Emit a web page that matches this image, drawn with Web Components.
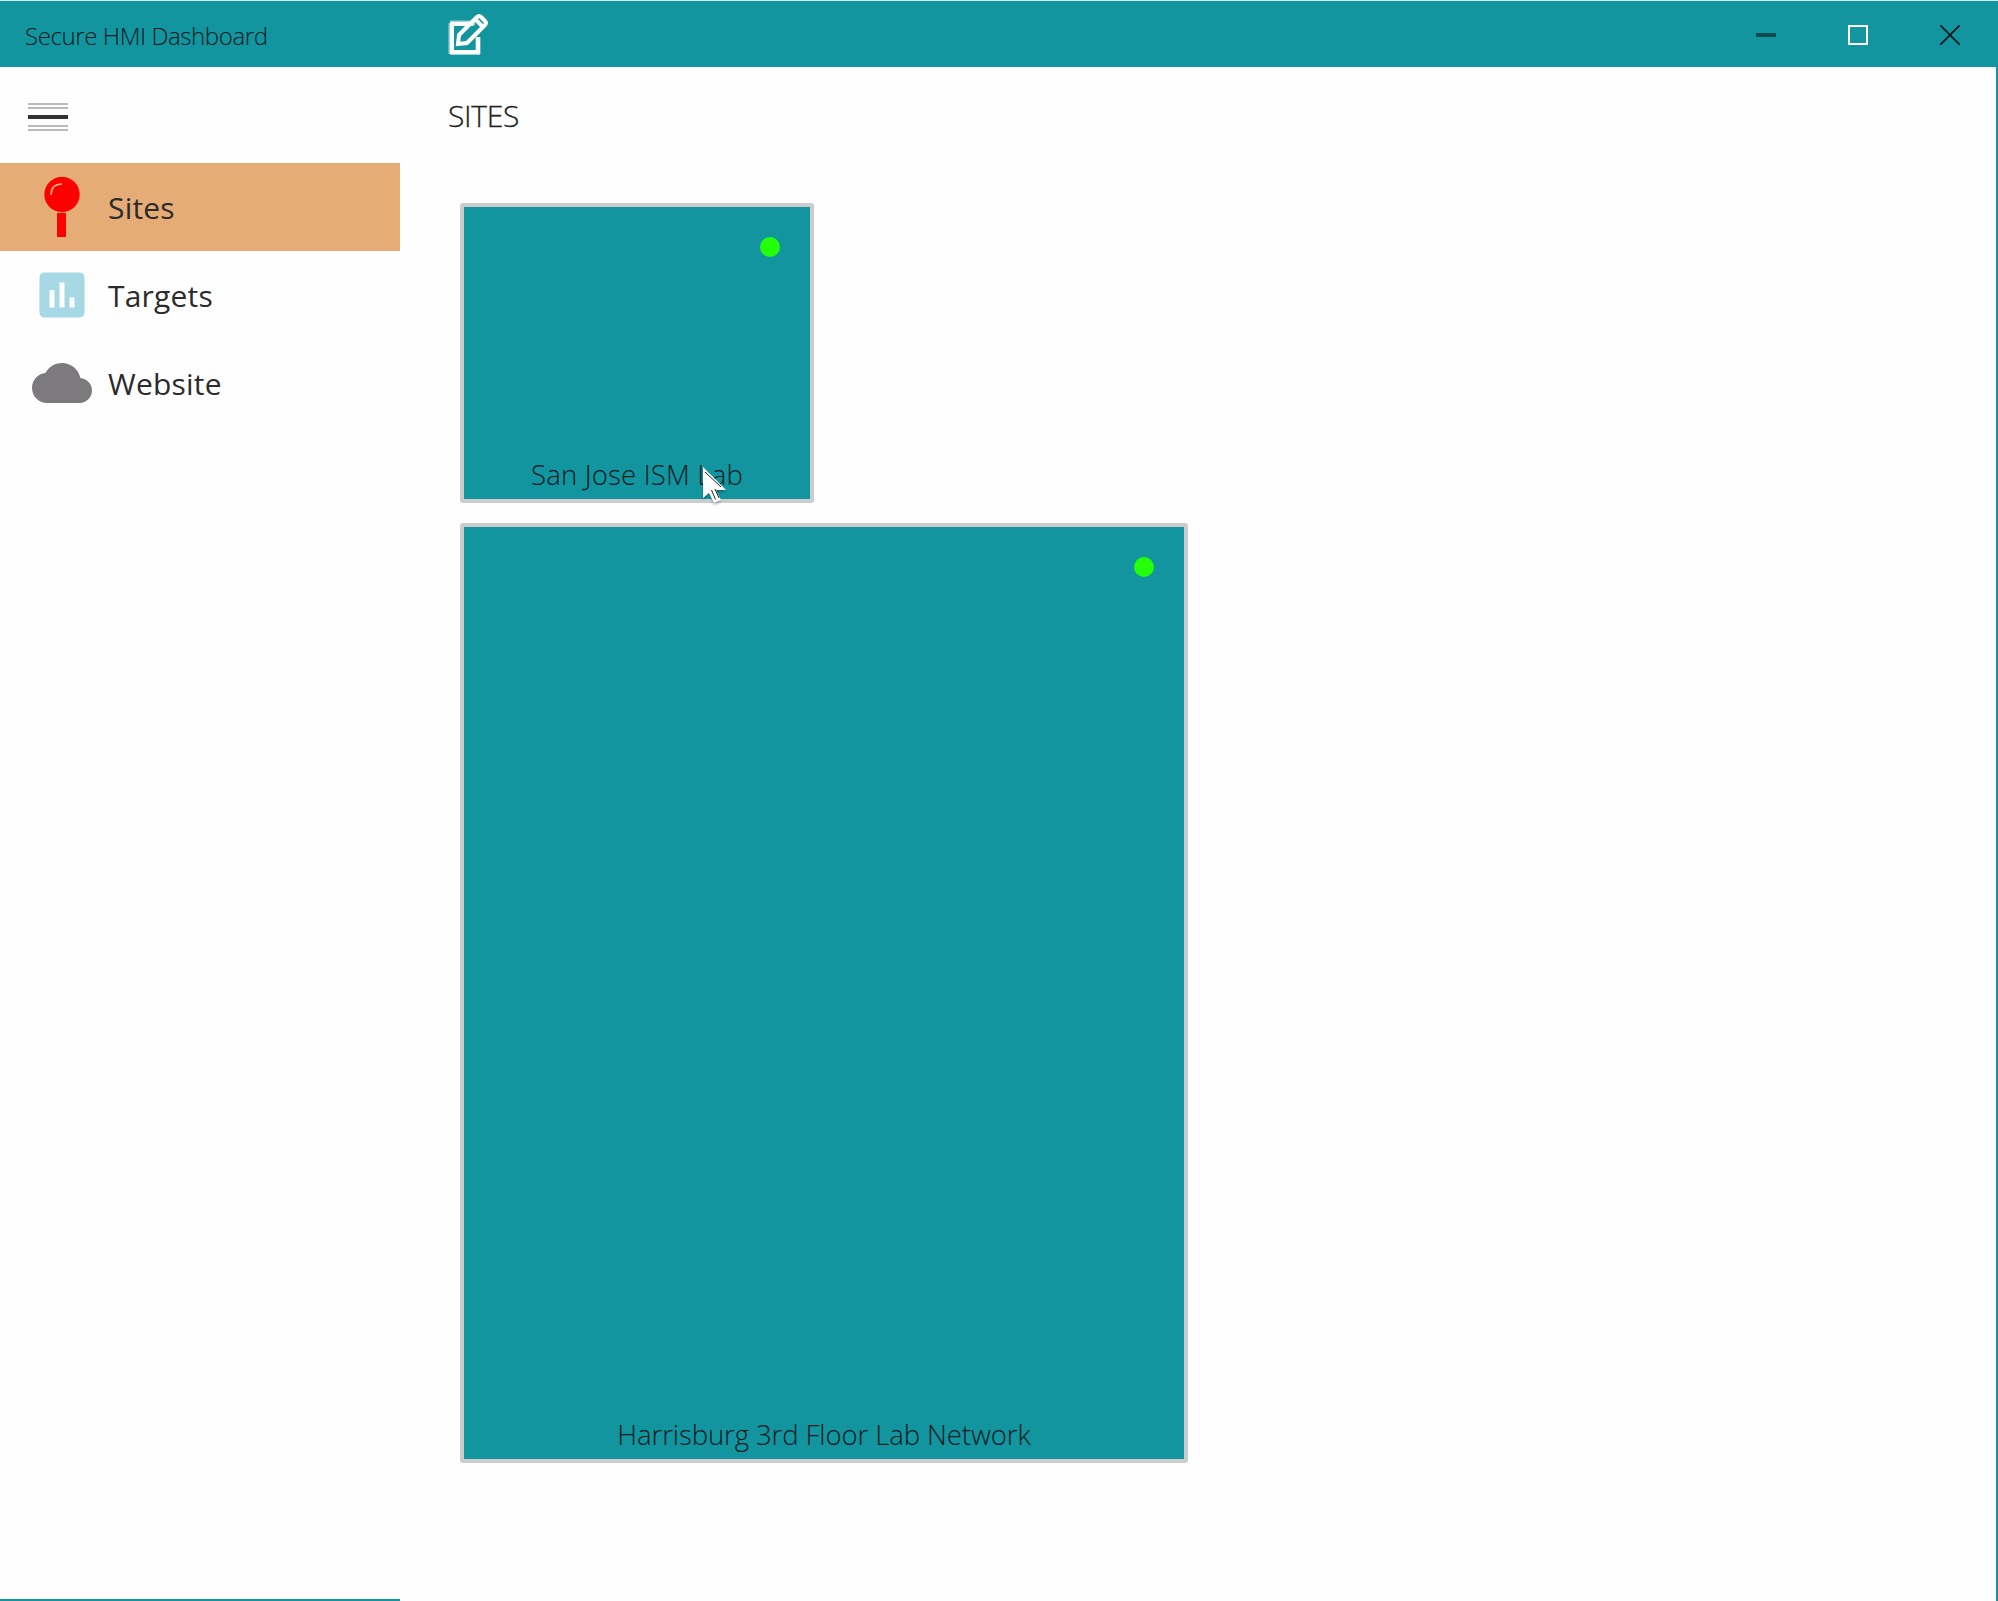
<!DOCTYPE html>
<html lang="en"><head><meta charset="utf-8"><title>Secure HMI Dashboard</title>
<style>html,body{margin:0;height:100%;overflow:hidden}body{font-family:"Open Sans","Noto Sans",sans-serif;background:#fefefe}</style></head>
<body>
<hmi-window></hmi-window>
<script>
const define=(name,html)=>customElements.define(name,class extends HTMLElement{
  constructor(){super();this.attachShadow({mode:'open'}).innerHTML=html;}
});
define('title-bar',`<style>
:host{display:flex;align-items:center;height:66px;background:#1395a0;border-top:1px solid #d9e8e8;color:#02191d}
.t{width:423px;padding-left:25px;font-size:24px;font-weight:300;line-height:66px;letter-spacing:-.4px;padding-top:4px;white-space:nowrap}
svg{display:block}.edit{flex:none}
.ctl{margin-left:auto;display:flex;gap:72px;padding-right:38px;padding-top:2px}
</style><div class="t"><slot></slot></div>
<svg class="edit" width="42" height="42" viewBox="0 0 42 42" fill="none" stroke="#fff" stroke-width="4"><path d="M2 10h25M30 24v17M2 41h30M3 10v31" stroke="#9dd3dc" stroke-width="5"/><path d="M25 11H4v28h26V24"/><path stroke-width="4" d="M10 31l1-9L29 4q2-2 4 0l4 4q2 2 0 4L19 30zM27 6l8 8"/></svg>
<div class="ctl">
<svg width="20" height="20"><path d="M0 8h20v4H0z" fill="#0b4850"/></svg>
<svg width="20" height="20"><path d="M1 1h18v18H1z" fill="none" stroke="#fff" stroke-width="2"/></svg>
<svg width="20" height="20"><path d="M0 0l20 20M20 0L0 20" stroke="#021a1e" stroke-width="1.8"/></svg></div>`);
define('menu-button',`<style>:host{display:block;height:96px;box-sizing:border-box;padding:36px 0 0 28px}svg{display:block}</style>
<svg width="40" height="28"><path d="M0 0h40v2H0zM0 4h40v2H0zM0 22h40v2H0zM0 26h40v2H0z" fill="#bababa"/><path d="M0 12h40v4H0z" fill="#333"/></svg>`);
define('nav-item',`<style>
:host{display:flex;align-items:center;height:88px;font-size:30px;color:#2b2b2b}
:host([active]){background:#e5ac76}
.i{padding-left:32px;display:flex;box-sizing:border-box;width:108px}
.l{white-space:nowrap;letter-spacing:.2px}
</style><span class="i"><slot name="icon"></slot></span><span class="l"><slot></slot></span>`);
define('site-card',`<style>
:host{display:flex;flex-direction:column;justify-content:space-between;box-sizing:border-box;border:4px solid #ccc;border-radius:3px;background:#1395a0;padding:30px 30px 0;color:#02191d}
.d{width:20px;height:20px;border-radius:50%;background:#23ff08;align-self:flex-end}
.n{font-size:27.5px;font-weight:300;line-height:40px;text-align:center;white-space:nowrap;letter-spacing:var(--ls,0);padding-bottom:4px}
</style><div class="d"></div><div class="n"><slot></slot></div>`);
define('mouse-pointer',`<style>:host{display:block;position:absolute;left:702px;top:466px}svg{display:block;filter:drop-shadow(0 2px 1px #0004)}</style>
<svg width="26" height="40" viewBox="0 0 26 40"><path d="M1 1v31l6-5 5 10 7-3-5-10h10z" fill="#fff"/><path d="M3 6l16 15M9.500 24l4 9.500M13 23l4 9" stroke="#222" fill="none"/></svg>`);
define('hmi-window',`<style>
:host{display:flex;flex-direction:column;height:100vh;background:#fefefe;position:relative}
.b{display:flex;flex:1;min-height:0;border-right:2px solid #1395a0;box-sizing:border-box}
nav{width:400px;box-sizing:border-box;border-bottom:2px solid #1395a0;flex:none}
main{padding-left:48px}
h1{margin:0;font-size:30px;font-weight:300;color:#222;line-height:40px;padding-top:29px;letter-spacing:-.3px;height:107px;box-sizing:content-box;-webkit-text-stroke:.3px #222}
.c{display:flex;flex-direction:column;gap:20px;padding-left:12px}
svg{display:block}
.s{width:354px;height:300px;--ls:.2px}.h{width:728px;height:940px;--ls:-.08px}
</style>
<title-bar>Secure HMI Dashboard</title-bar>
<div class="b"><nav><menu-button></menu-button>
<nav-item active><svg slot="icon" width="60" height="60"><circle cx="30" cy="17.5" r="17.7" fill="red"/><path d="M25 36h9v24h-9z" fill="red"/><path d="M19 18q0-11 11-11" fill="none" stroke="#ffb080" stroke-width="1.6"/></svg>Sites</nav-item>
<nav-item><svg slot="icon" width="60" height="60" viewBox="0 0 24 24"><path fill="#a6d8e5" d="M19 3H5c-1.1 0-2 .9-2 2v14c0 1.1.9 2 2 2h14c1.1 0 2-.9 2-2V5c0-1.1-.9-2-2-2zM9 17H7v-7h2v7zm4 0h-2V7h2v10zm4 0h-2v-4h2v4z"/></svg>Targets</nav-item>
<nav-item><svg slot="icon" width="60" height="60" viewBox="0 0 24 24"><path fill="#7d7a7e" d="M19.35 10.04C18.67 6.59 15.64 4 12 4 9.11 4 6.6 5.64 5.35 8.04 2.34 8.36 0 10.91 0 14c0 3.31 2.69 6 6 6h13c2.76 0 5-2.24 5-5 0-2.64-2.05-4.78-4.65-4.96z"/></svg>Website</nav-item>
</nav><main><h1>SITES</h1><div class="c"><site-card class="s">San Jose ISM Lab</site-card><site-card class="h">Harrisburg 3rd Floor Lab Network</site-card></div></main></div>
<mouse-pointer></mouse-pointer>`);
</script></body></html>
